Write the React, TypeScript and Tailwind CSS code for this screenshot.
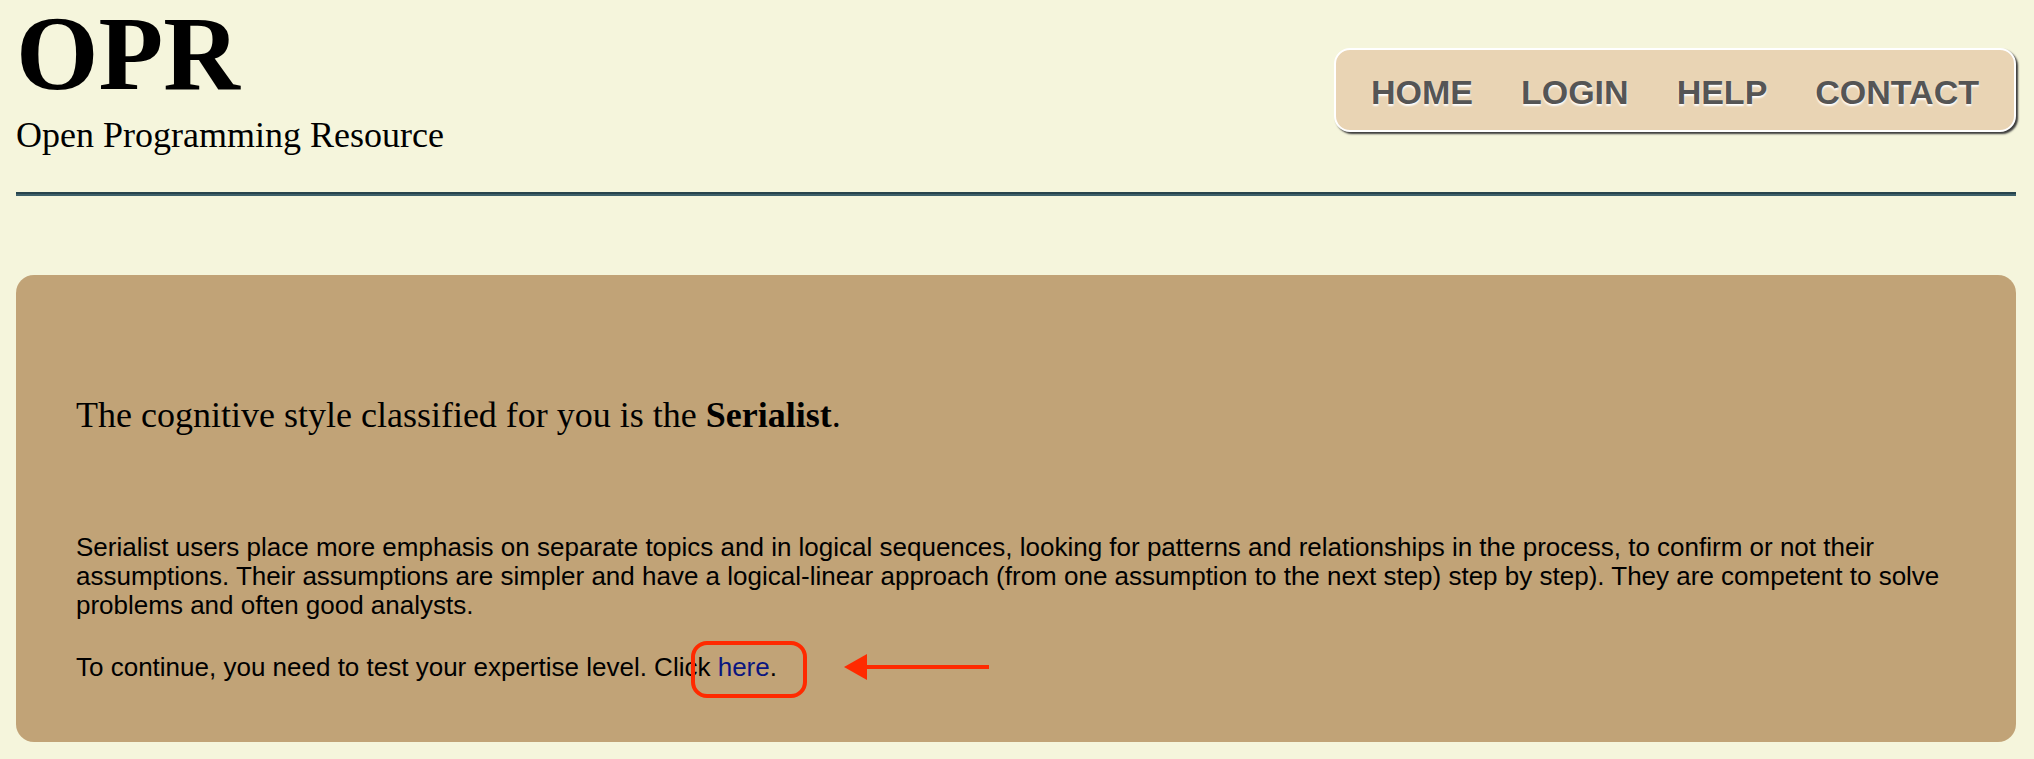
import React from "react";

/* ---------------- NAV ---------------- */
const NAV = ["HOME", "LOGIN", "HELP", "CONTACT"];

function TopNav() {
  return (
    <nav className="mt-[47px] flex h-[84px] items-center gap-[48px] rounded-[16px] border-2 border-white bg-[#e9d4b4] pl-[35px] pr-[35px] pt-[4px] shadow-[2px_2px_2px_#3a3a3a]">
      {NAV.map((item) => (
        <a
          key={item}
          href="#"
          className="font-['Liberation_Sans',Arial,sans-serif] text-[34px] font-bold leading-none text-[#555555] [text-shadow:0_2px_2px_#ffffff]"
        >
          {item}
        </a>
      ))}
    </nav>
  );
}

/* ---------------- RED CALLOUT ---------------- */
function Arrow() {
  return (
    <svg
      width="146"
      height="26"
      viewBox="0 0 146 26"
      className="absolute left-[126px] top-[2px]"
    >
      <line x1="20" y1="13" x2="145" y2="13" stroke="#ff2a00" strokeWidth="4" />
      <polygon points="0,13 23,0 23,26" fill="#ff2a00" />
    </svg>
  );
}

/* ---------------- APP ---------------- */
export default function App() {
  return (
    <div className="min-h-screen bg-[#f5f5dc] pb-4 pl-4 pr-[18px] pt-px text-black">
      <header className="flex items-start justify-between">
        <div>
          <h1 className="font-['Liberation_Serif','Times_New_Roman',serif] text-[106px] font-bold leading-[106px]">
            OPR
          </h1>
          <p className="mt-[8px] font-['Liberation_Serif','Times_New_Roman',serif] text-[36px] leading-[40px]">
            Open Programming Resource
          </p>
        </div>
        <TopNav />
      </header>

      <div className="mt-[37px] border-b-2 border-t-2 border-b-[#3d5f69] border-t-[#27444d]" />

      <main className="mt-[79px] rounded-[18px] bg-[#c1a377] px-[60px] pb-[60px] pt-[120px]">
        <h2 className="font-['Liberation_Serif','Times_New_Roman',serif] text-[36px] leading-[41px]">
          The cognitive style classified for you is the <b>Serialist</b>.
        </h2>

        <div className="mt-[97px] font-['Liberation_Sans',Arial,sans-serif] text-[26px] leading-[29px]">
          <p>
            Serialist users place more emphasis on separate topics and in logical
            sequences, looking for patterns and relationships in the process, to
            confirm or not their assumptions. Their assumptions are simpler and
            have a logical-linear approach (from one assumption to the next step)
            step by step). They are competent to solve problems and often good
            analysts.
          </p>
          <p className="mt-[33px]">
            To continue, you need to test your expertise level. Click{" "}
            <span className="relative">
              <a href="#" className="text-[#0a1680]">
                here
              </a>
              .
              <span className="pointer-events-none absolute -bottom-[16px] -left-[27px] -right-[30px] -top-[11px] rounded-[16px] border-4 border-[#ff2a00]" />
              <Arrow />
            </span>
          </p>
        </div>
      </main>
    </div>
  );
}
